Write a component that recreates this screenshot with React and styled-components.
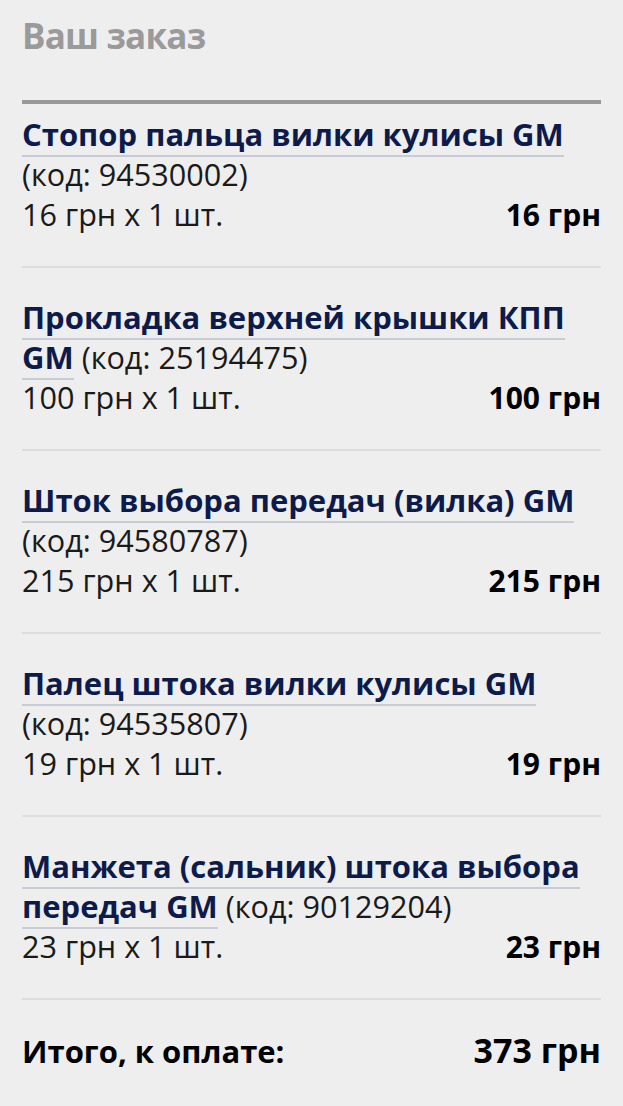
import React from "react";
import styled, { createGlobalStyle } from "styled-components";

const Global = createGlobalStyle`
  html, body {
    margin: 0;
    padding: 0;
    background: #eeeeee;
  }
  body {
    font-family: "Open Sans", "Noto Sans", sans-serif;
    color: #111111;
  }
`;

const Page = styled.div`
  padding: 0 22px;
  min-height: 1106px;
  box-sizing: border-box;
`;

const Heading = styled.h2`
  margin: 0;
  padding-top: 14px;
  height: 100px;
  box-sizing: border-box;
  font-size: 35px;
  line-height: 44px;
  font-weight: 700;
  color: #9a9a9a;
  letter-spacing: -0.8px;
`;

const Rule = styled.div`
  height: 4px;
  background: #999999;
`;

const List = styled.div`
  display: flex;
  flex-direction: column;
`;

const Item = styled.div`
  padding: 29px 0 31px;
  border-bottom: 2px solid #dddddd;
  &:first-child {
    padding-top: 9.5px;
  }
`;

const Line = styled.div`
  font-size: 30.6px;
  line-height: 40px;
  font-weight: 400;
`;

const Title = styled.a`
  font-size: 31px;
  font-weight: 700;
  color: #0d1b4b;
  text-decoration: none;
  border-bottom: 2px solid #c6cbd6;
`;

const Code = styled.span`
  font-weight: 400;
  color: #1a1a1a;
  white-space: nowrap;
`;

const PriceRow = styled.div`
  display: flex;
  justify-content: space-between;
  align-items: baseline;
  font-size: 30.6px;
  line-height: 40px;
`;

const Qty = styled.span`
  font-weight: 400;
  color: #1a1a1a;
`;

const Sum = styled.span`
  font-size: 30px;
  font-weight: 700;
  color: #000000;
`;

const TotalRow = styled.div`
  display: flex;
  justify-content: space-between;
  align-items: baseline;
  padding-top: 30px;
  font-size: 31px;
  line-height: 40px;
  font-weight: 700;
  color: #000000;
`;

const TotalSum = styled.span`
  font-size: 34px;
`;

const items = [
  { title: "Стопор пальца вилки кулисы GM", code: "94530002", price: 16 },
  { title: "Прокладка верхней крышки КПП GM", code: "25194475", price: 100 },
  { title: "Шток выбора передач (вилка) GM", code: "94580787", price: 215 },
  { title: "Палец штока вилки кулисы GM", code: "94535807", price: 19 },
  { title: "Манжета (сальник) штока выбора передач GM", code: "90129204", price: 23 },
];

export default function App() {
  return (
    <>
      <Global />
      <Page>
        <Heading>Ваш заказ</Heading>
        <Rule />
        <List>
          {items.map((it) => (
            <Item key={it.code}>
              <Line>
                <Title href="#">{it.title}</Title> <Code>(код: {it.code})</Code>
              </Line>
              <PriceRow>
                <Qty>{it.price} грн x 1 шт.</Qty>
                <Sum>{it.price} грн</Sum>
              </PriceRow>
            </Item>
          ))}
        </List>
        <TotalRow>
          <span>Итого, к оплате:</span>
          <TotalSum>373 грн</TotalSum>
        </TotalRow>
      </Page>
    </>
  );
}
